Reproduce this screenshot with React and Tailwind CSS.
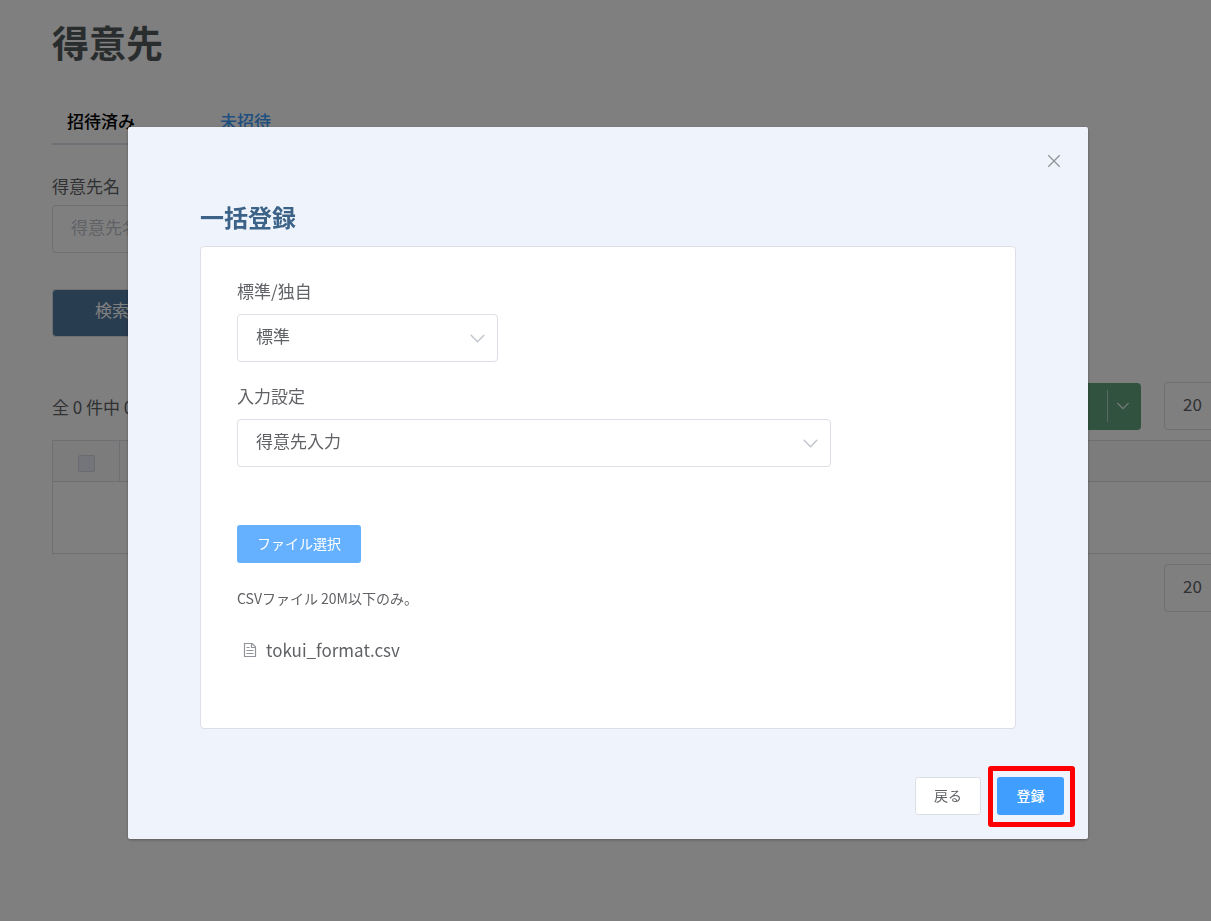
import React from "react";

function Chevron({ className }) {
  return (
    <svg
      viewBox="0 0 16 16"
      fill="none"
      stroke="currentColor"
      strokeWidth="1.3"
      strokeLinecap="round"
      strokeLinejoin="round"
      aria-hidden="true"
      className={className}
    >
      <path d="M2 5l6 6 6-6" />
    </svg>
  );
}

function DocumentIcon() {
  return (
    <svg
      viewBox="0 0 16 16"
      fill="none"
      stroke="currentColor"
      strokeWidth="1.2"
      aria-hidden="true"
      className="size-4 text-[#909399]"
    >
      <path d="M2.5 1.5h7.6l3.4 3.4v9.6h-11zM9.5 1.5v4h4M4.5 8.5h7M4.5 11.5h7M4.5 5.5h3" />
    </svg>
  );
}

function SelectField({ id, label, value, className }) {
  return (
    <div className="flex flex-col gap-[11px]">
      <label htmlFor={id} className="text-[17px] leading-6">
        {label}
      </label>
      <div className={className}>
        <select
          id={id}
          defaultValue={value}
          className="h-12 w-full appearance-none rounded border border-[#dcdfe6] bg-white pb-1 pl-[18px] text-[17px] text-[#606266]"
        >
          <option>{value}</option>
        </select>
        <Chevron className="pointer-events-none absolute top-4 right-3 size-[17px] text-[#c0c4cc]" />
      </div>
    </div>
  );
}

function PageSize({ label }) {
  return (
    <select
      aria-label={label}
      defaultValue="20"
      className="-mr-16 h-12 w-[111px] shrink-0 appearance-none rounded border border-[#dcdfe6] bg-white pb-1 pl-[18px] text-[17px] text-[#606266]"
    >
      <option>20</option>
    </select>
  );
}

function CustomerPage() {
  return (
    <main className="pt-3.5 pl-[52px]">
      <h1 className="text-[37px] leading-14 font-bold text-[#555a5c]">得意先</h1>

      <nav className="mt-[34px] flex text-[17px] leading-[34px] font-medium">
        <a href="#invited" className="h-[41px] w-[153px] border-b-2 border-[#dfe2ee] pl-[15px] text-black">
          招待済み
        </a>
        <a href="#uninvited" className="h-[41px] w-[153px] pl-[15px] text-[#409eff]">
          未招待
        </a>
      </nav>

      <form className="mt-[29px] flex flex-col items-start">
        <label htmlFor="customer-name" className="text-[17px] leading-6">
          得意先名
        </label>
        <input
          id="customer-name"
          placeholder="得意先名"
          className="mt-[7px] h-12 w-64 rounded border border-[#dcdfe6] bg-white pb-1.5 pl-[18px] text-[17px] placeholder:text-[#c0c4cc]"
        />
        <button
          type="button"
          className="mt-9 h-12 rounded border border-[#dcdfe6] bg-[#527aa2] px-[42px] pb-1.5 text-[17px] text-white"
        >
          検索
        </button>
      </form>

      <div className="mt-[45px] flex items-center">
        <p className="grow pt-0.5 text-[17px]">全 0 件中 0 件を表示</p>
        <button
          type="button"
          aria-label="その他の操作"
          className="flex h-[47px] items-center rounded bg-[#62a47c] pl-20 text-white"
        >
          <span className="h-8 border-l border-white/50" />
          <Chevron className="mr-[11px] ml-2 size-3.5" />
        </button>
        <span className="w-[23px] shrink-0" />
        <PageSize label="表示件数" />
      </div>

      <table className="mt-2.5 w-full border-collapse border border-r-0 border-[#dcdfe6]">
        <thead>
          <tr className="h-[41px] bg-[#f8f8fa]">
            <th className="w-[67px] border border-[#dcdfe6] text-center align-middle">
              <input
                type="checkbox"
                aria-label="すべて選択"
                className="inline-block size-[17px] appearance-none rounded-xs border border-[#d3d6e3] bg-[#e8eaf4] align-middle"
              />
            </th>
            <th className="border-b border-[#dcdfe6]" />
          </tr>
        </thead>
        <tbody>
          <tr className="h-[72px]">
            <td colSpan={2} />
          </tr>
        </tbody>
      </table>

      <div className="mt-2.5 flex justify-end">
        <PageSize label="表示件数(下)" />
      </div>
    </main>
  );
}

function RegisterDialog() {
  return (
    <section
      role="dialog"
      aria-modal="true"
      aria-labelledby="dialog-title"
      className="flex w-full flex-col rounded-xs bg-[#eff4fc] pb-6 shadow-[0_1px_3px_rgba(0,0,0,0.3)]"
    >
      <header className="flex justify-end pt-6 pr-6">
        <button type="button" aria-label="閉じる" className="grid size-5 place-items-center text-[#909399]">
          <svg viewBox="0 0 14 14" fill="none" stroke="currentColor" className="size-3.5" aria-hidden="true">
            <path d="M1.3 1.3l11.4 11.4M12.7 1.3L1.3 12.7" strokeWidth="1.3" />
          </svg>
        </button>
      </header>

      <div className="px-[72px] pt-7">
        <h2 id="dialog-title" className="text-2xl leading-9 font-bold text-[#3c6387]">
          一括登録
        </h2>
        <div className="mt-[11px] flex flex-col rounded border border-[#dcdfe6] bg-white px-9 pt-8 pb-[62px]">
          <SelectField id="format" label="標準/独自" value="標準" className="relative w-[261px] max-w-full" />
          <div className="h-[22px]" />
          <SelectField id="setting" label="入力設定" value="得意先入力" className="relative w-[594px] max-w-full" />
          <button
            type="button"
            className="mt-[58px] h-[38px] w-[124px] rounded-[3px] bg-[#66b1ff] pb-0.5 text-sm text-white"
          >
            ファイル選択
          </button>
          <p className="mt-[23px] text-sm leading-6">CSVファイル 20M以下のみ。</p>
          <a href="#file" className="mt-6 flex items-center gap-2 pl-[5px] text-[17px] leading-8">
            <DocumentIcon />
            tokui_format.csv
          </a>
        </div>
      </div>

      <footer className="mt-12 flex justify-end gap-4 pr-6 text-sm">
        <button type="button" className="h-[38px] w-[66px] rounded-[3px] border border-[#dcdfe6] bg-white pb-0.5">
          戻る
        </button>
        <div className="relative">
          <button
            type="button"
            className="h-[38px] w-[67px] rounded-[3px] bg-[#409eff] pb-0.5 font-medium text-white"
          >
            登録
          </button>
          <span className="pointer-events-none absolute -top-[11px] -right-[11px] -bottom-3 -left-[9px] rounded-[3px] border-[5px] border-[#ff0000]" />
        </div>
      </footer>
    </section>
  );
}

export default function App() {
  return (
    <div className="relative min-h-screen overflow-x-hidden bg-white font-['Noto_Sans_CJK_JP',sans-serif] text-[#606266]">
      <CustomerPage />
      <div className="fixed inset-0 overflow-y-auto bg-black/50 pt-[127px] pr-[123px] pl-32">
        <RegisterDialog />
      </div>
    </div>
  );
}
